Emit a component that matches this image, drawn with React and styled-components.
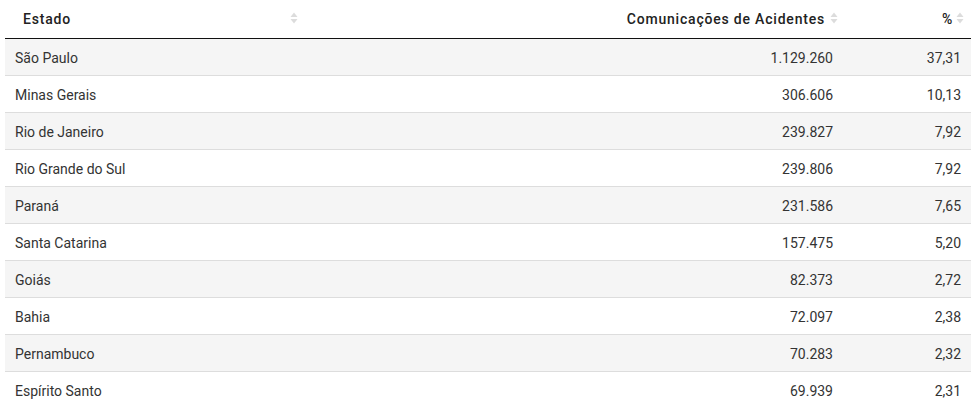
import React from "react";
import styled, { createGlobalStyle } from "styled-components";

const GlobalStyle = createGlobalStyle`
  html, body {
    margin: 0;
    padding: 0;
    background: #fff;
  }
  body {
    font-family: Roboto, "Liberation Sans", Arial, sans-serif;
    color: #333;
  }
`;

const rows = [
  ["São Paulo", "1.129.260", "37,31"],
  ["Minas Gerais", "306.606", "10,13"],
  ["Rio de Janeiro", "239.827", "7,92"],
  ["Rio Grande do Sul", "239.806", "7,92"],
  ["Paraná", "231.586", "7,65"],
  ["Santa Catarina", "157.475", "5,20"],
  ["Goiás", "82.373", "2,72"],
  ["Bahia", "72.097", "2,38"],
  ["Pernambuco", "70.283", "2,32"],
  ["Espírito Santo", "69.939", "2,31"],
];

const Wrapper = styled.div`
  padding: 0 8px 0 5px;
`;

const Table = styled.table`
  width: 100%;
  border-collapse: separate;
  border-spacing: 0;
  table-layout: fixed;
  font-size: 14px;
  line-height: 20px;
`;

const Col = styled.col`
  width: ${(p) => p.$width}px;
`;

const HeadCell = styled.th`
  position: relative;
  padding: 9px 18px;
  text-align: ${(p) => (p.$right ? "right" : "left")};
  font-weight: 500;
  color: #222;
  letter-spacing: 0.8px;
  border-bottom: 1px solid #111;
  white-space: nowrap;
`;

const SortIcon = styled.svg`
  position: absolute;
  right: ${(p) => p.$right}px;
  top: 50%;
  margin-top: -7px;
`;

const Row = styled.tr`
  background: ${(p) => (p.$odd ? "#f5f5f5" : "#fff")};
`;

const Cell = styled.td`
  padding: 9px 10px 7px;
  text-align: ${(p) => (p.$right ? "right" : "left")};
  color: #333;
  border-top: ${(p) => (p.$first ? "none" : "1px solid #ddd")};
`;

const Sort = ({ right }) => (
  <SortIcon $right={right} width="8" height="12" viewBox="0 0 8 12">
    <path d="M4 0.5 L7.5 5 L0.5 5 Z" fill="#dcdcdc" />
    <path d="M4 11.5 L7.5 7 L0.5 7 Z" fill="#dcdcdc" />
  </SortIcon>
);

export default function App() {
  return (
    <Wrapper>
      <GlobalStyle />
      <Table>
        <colgroup>
          <Col $width={300} />
          <Col $width={538} />
          <Col $width={128} />
        </colgroup>
        <thead>
          <tr>
            <HeadCell>
              Estado
              <Sort right={7} />
            </HeadCell>
            <HeadCell $right>
              Comunicações de Acidentes
              <Sort right={5} />
            </HeadCell>
            <HeadCell $right>
              %
              <Sort right={7} />
            </HeadCell>
          </tr>
        </thead>
        <tbody>
          {rows.map((r, i) => (
            <Row key={r[0]} $odd={i % 2 === 0}>
              <Cell $first={i === 0}>{r[0]}</Cell>
              <Cell $first={i === 0} $right>
                {r[1]}
              </Cell>
              <Cell $first={i === 0} $right>
                {r[2]}
              </Cell>
            </Row>
          ))}
        </tbody>
      </Table>
    </Wrapper>
  );
}
